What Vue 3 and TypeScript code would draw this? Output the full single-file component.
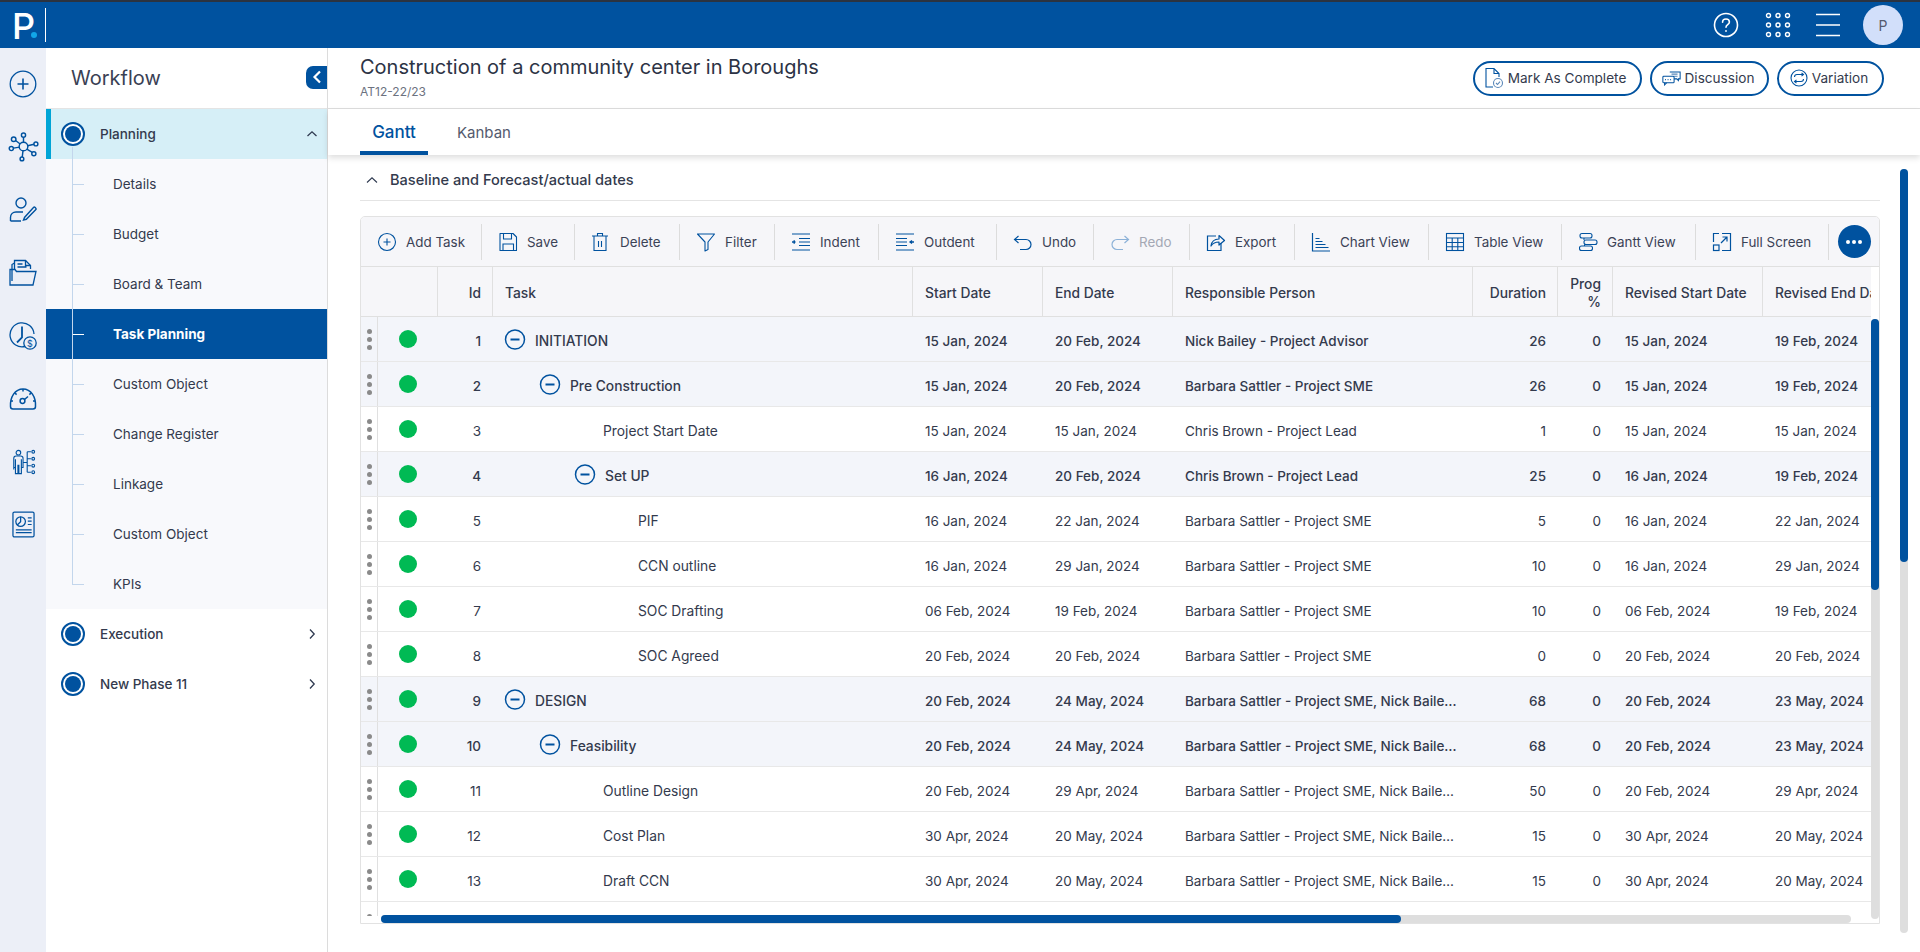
<script setup lang="ts">
interface Row {
  id: number; task: string; level: number; group: boolean; start: string; end: string;
  person: string; dur: number; rs: string; re: string;
}
const B = 'Barbara Sattler - Project SME';
const BN = 'Barbara Sattler - Project SME, Nick Bailey - Project Advisor';
const rows: Row[] = [
  { id: 1, task: 'INITIATION', level: 0, group: true, start: '15 Jan, 2024', end: '20 Feb, 2024', person: 'Nick Bailey - Project Advisor', dur: 26, rs: '15 Jan, 2024', re: '19 Feb, 2024' },
  { id: 2, task: 'Pre Construction', level: 1, group: true, start: '15 Jan, 2024', end: '20 Feb, 2024', person: B, dur: 26, rs: '15 Jan, 2024', re: '19 Feb, 2024' },
  { id: 3, task: 'Project Start Date', level: 2, group: false, start: '15 Jan, 2024', end: '15 Jan, 2024', person: 'Chris Brown - Project Lead', dur: 1, rs: '15 Jan, 2024', re: '15 Jan, 2024' },
  { id: 4, task: 'Set UP', level: 2, group: true, start: '16 Jan, 2024', end: '20 Feb, 2024', person: 'Chris Brown - Project Lead', dur: 25, rs: '16 Jan, 2024', re: '19 Feb, 2024' },
  { id: 5, task: 'PIF', level: 3, group: false, start: '16 Jan, 2024', end: '22 Jan, 2024', person: B, dur: 5, rs: '16 Jan, 2024', re: '22 Jan, 2024' },
  { id: 6, task: 'CCN outline', level: 3, group: false, start: '16 Jan, 2024', end: '29 Jan, 2024', person: B, dur: 10, rs: '16 Jan, 2024', re: '29 Jan, 2024' },
  { id: 7, task: 'SOC Drafting', level: 3, group: false, start: '06 Feb, 2024', end: '19 Feb, 2024', person: B, dur: 10, rs: '06 Feb, 2024', re: '19 Feb, 2024' },
  { id: 8, task: 'SOC Agreed', level: 3, group: false, start: '20 Feb, 2024', end: '20 Feb, 2024', person: B, dur: 0, rs: '20 Feb, 2024', re: '20 Feb, 2024' },
  { id: 9, task: 'DESIGN', level: 0, group: true, start: '20 Feb, 2024', end: '24 May, 2024', person: BN, dur: 68, rs: '20 Feb, 2024', re: '23 May, 2024' },
  { id: 10, task: 'Feasibility', level: 1, group: true, start: '20 Feb, 2024', end: '24 May, 2024', person: BN, dur: 68, rs: '20 Feb, 2024', re: '23 May, 2024' },
  { id: 11, task: 'Outline Design', level: 2, group: false, start: '20 Feb, 2024', end: '29 Apr, 2024', person: BN, dur: 50, rs: '20 Feb, 2024', re: '29 Apr, 2024' },
  { id: 12, task: 'Cost Plan', level: 2, group: false, start: '30 Apr, 2024', end: '20 May, 2024', person: BN, dur: 15, rs: '30 Apr, 2024', re: '20 May, 2024' },
  { id: 13, task: 'Draft CCN', level: 2, group: false, start: '30 Apr, 2024', end: '20 May, 2024', person: BN, dur: 15, rs: '30 Apr, 2024', re: '20 May, 2024' }
];
const subs = ['Details', 'Budget', 'Board & Team', 'Task Planning', 'Custom Object', 'Change Register', 'Linkage', 'Custom Object', 'KPIs'];
</script>

<template>
  <div class="page">
    <header class="topbar">
      <div class="logo"><span class="logo-p">P</span><i class="logo-dot"></i><i class="logo-line"></i></div>
      <div class="top-actions">
        <svg class="t-help" width="26" height="26" viewBox="0 0 26 26" fill="none" stroke="#fff" stroke-width="1.6"><circle cx="13" cy="13" r="11.5"/><path d="M9.6 10.2c0-2 1.5-3.2 3.4-3.2s3.4 1.2 3.4 3c0 2.6-3.4 2.6-3.4 5.2" stroke-linecap="round"/><circle cx="13" cy="19" r=".9" fill="#fff" stroke="none"/></svg>
        <svg class="t-apps" width="26" height="26" viewBox="0 0 26 26" fill="none" stroke="#fff" stroke-width="1.4"><circle cx="3.5" cy="3.5" r="2"/><circle cx="13" cy="3.5" r="2"/><circle cx="22.5" cy="3.5" r="2"/><circle cx="3.5" cy="13" r="2"/><circle cx="13" cy="13" r="2"/><circle cx="22.5" cy="13" r="2"/><circle cx="3.5" cy="22.5" r="2"/><circle cx="13" cy="22.5" r="2"/><circle cx="22.5" cy="22.5" r="2"/></svg>
        <svg class="t-menu" width="26" height="24" viewBox="0 0 26 24" fill="none" stroke="#fff" stroke-width="1.6"><path d="M1 1.5h24M1 12h24M1 22.5h24"/></svg>
        <div class="avatar">P</div>
      </div>
    </header>

    <div class="shell">
      <nav class="rail">
        <svg viewBox="0 0 28 28" class="r-icon" fill="none" stroke="#00529f" stroke-width="1.3"><circle cx="14" cy="14" r="12.8"/><path d="M14 8.5v11M8.5 14h11" stroke-width="1.6"/></svg>
        <svg viewBox="0 0 30 30" class="r-icon r-net" fill="none" stroke="#00529f" stroke-width="1.4"><circle cx="15" cy="15" r="4.2"/><circle cx="15" cy="4" r="2"/><circle cx="5.5" cy="8" r="2.2"/><circle cx="3.2" cy="17" r="2"/><circle cx="13.5" cy="27" r="1.8"/><circle cx="25" cy="22" r="2"/><circle cx="27" cy="12.5" r="1.9"/><path d="M15 6v5M7.3 9.2l4.5 3.4M5.2 16.6l6-1M14.5 19.2l-.7 6M18.2 17.6l5.3 3M19 14.2l6.2-1.4"/></svg>
        <svg viewBox="0 0 28 28" class="r-icon" fill="none" stroke="#00529f" stroke-width="1.4"><circle cx="12" cy="7" r="5"/><path d="M1.5 25v-3.5c0-3.5 2.5-5.5 5.500-5.500h7M1.500 25H12"/><path d="M15.500 24.500l-1 2.500 2.800-.7 9.600-9.800c.8-.8-1.300-3-2.200-2.200z" transform="translate(0 -3)"/></svg>
        <svg viewBox="0 0 28 28" class="r-icon" fill="none" stroke="#00529f" stroke-width="1.3"><path d="M3 22V5.500l2.500-1.500"/><path d="M5.500 10V1.500h11l5 5V10"/><path d="M16.500 1.500v5h5M8.500 5h5M8.500 8h9"/><path d="M1 10.500h5l1.500 2h19.500L24 26H1z"/></svg>
        <svg viewBox="0 0 28 28" class="r-icon" fill="none" stroke="#00529f" stroke-width="1.3"><path d="M16 24.500A12 12 0 1 1 25 12"/><path d="M13 4.500v11l-5 5" stroke-width="1.8"/><circle cx="21" cy="21" r="6.200" fill="#eceff7"/><text x="21" y="24.500" font-size="9" font-family="Inter, sans-serif" fill="#00529f" stroke="none" text-anchor="middle">$</text></svg>
        <svg viewBox="0 0 28 24" class="r-icon" fill="none" stroke="#00529f" stroke-width="1.5"><path d="M4 22a2.500 2.500 0 0 1-2.500-2.500C1 10 6 2 14 2s13 8 12.500 17.500A2.500 2.500 0 0 1 24 22z"/><circle cx="13.500" cy="14" r="2.400"/><path d="M15.500 12.500l3.500-3M14 2v2.500M6 6l1.600 1.600M22 6l-1.600 1.600M2 14h2M24 14h2"/></svg>
        <svg viewBox="0 0 27 28" class="r-person" fill="none" stroke="#00529f" stroke-width="1.2"><circle cx="8" cy="4" r="2.500"/><path d="M3 22V10c0-2 1-2.500 2.500-2.500h5C12 7.500 13 8 13 10v10h-1.800V11M3 20h1.800v-9M4.800 20v6.500h2.700V17M8.500 17v9.500h2.700V20"/><path d="M13 14.500h4M17.500 3v22M17.500 3h4M17.500 10.500h4M17.500 18h4M17.500 25h4"/><circle cx="24" cy="3" r="1.500"/><circle cx="24" cy="10.500" r="1.500"/><circle cx="24" cy="18" r="1.500"/><circle cx="24" cy="25" r="1.500"/></svg>
        <svg viewBox="0 0 24 28" class="r-small" fill="none" stroke="#00529f" stroke-width="1.300"><rect x="1" y="1" width="22" height="26" rx="1.500"/><circle cx="9" cy="11" r="5"/><path d="M9 6v5l-3.500 3.500M16.500 7h4M16.500 10.500h4M16.500 14h4M4 19.500h16.500M4 22.500h16.500"/></svg>
      </nav>

      <aside class="side">
        <div class="side-head">
          <span class="side-title">Workflow</span>
          <button class="collapse"><svg width="10" height="14" viewBox="0 0 10 14" fill="none" stroke="#fff" stroke-width="2.200"><path d="M8 1.500L2.500 7 8 12.500"/></svg></button>
        </div>
        <div class="phase phase-open">
          <span class="node"></span><span class="phase-name">Planning</span>
          <svg class="chev" width="12" height="8" viewBox="0 0 12 8" fill="none" stroke="#2f3a50" stroke-width="1.300"><path d="M1.500 6L6 1.800 10.500 6"/></svg>
        </div>
        <ul class="subs">
          <i class="tree"></i>
          <li v-for="(s, i) in subs" :key="i" class="sub" :class="{ on: s === 'Task Planning' }"><i class="tick"></i>{{ s }}</li>
        </ul>
        <div class="phase">
          <span class="node"></span><span class="phase-name">Execution</span>
          <svg class="chev" width="8" height="12" viewBox="0 0 8 12" fill="none" stroke="#2f3a50" stroke-width="1.300"><path d="M2 1.500L6.200 6 2 10.500"/></svg>
        </div>
        <div class="phase">
          <span class="node"></span><span class="phase-name">New Phase 11</span>
          <svg class="chev" width="8" height="12" viewBox="0 0 8 12" fill="none" stroke="#2f3a50" stroke-width="1.300"><path d="M2 1.500L6.200 6 2 10.500"/></svg>
        </div>
      </aside>

      <main class="main">
        <div class="title-row">
          <div>
            <h1 class="title">Construction of a community center in Boroughs</h1>
            <div class="code">AT12-22/23</div>
          </div>
          <div class="btns">
            <button class="pill p1">
              <svg width="20" height="22" viewBox="0 0 20 22" fill="none" stroke="#00529f" stroke-width="1.100"><path d="M9 20H2V1.500h8l5 5V10M10 1.500v5h5"/><circle cx="14" cy="16" r="4.500" stroke="#5b88b8"/><path d="M12 16l1.500 1.500 2.500-2.800" stroke="#5b88b8"/></svg>
              Mark As Complete
            </button>
            <button class="pill p2">
              <svg width="19" height="16" viewBox="0 0 22 18" fill="none" stroke="#00529f" stroke-width="1.200"><path d="M9 2h12v8h-2v2l-2-2h-3"/><path d="M11 4.500h7M14 7h4" stroke="#5b88b8"/><rect x="1" y="7" width="13" height="7.500" rx="1"/><path d="M3 14.500V17l2.500-2.500" /><path d="M3.500 10.800h1M6.500 10.800h1M9.500 10.800h1" stroke-width="1.400"/></svg>
              Discussion
            </button>
            <button class="pill p3">
              <svg width="18" height="18" viewBox="0 0 18 18" fill="none" stroke="#00529f" stroke-width="1.100"><circle cx="9" cy="9" r="8"/><path d="M4.500 8c0-1.500 1-2.500 2.500-2.500h6.500M11.500 3.800l2 1.700-2 1.700M13.500 10c0 1.500-1 2.500-2.500 2.500H4.500M6.500 10.800l-2 1.700 2 1.700"/></svg>
              Variation
            </button>
          </div>
        </div>

        <div class="tabs">
          <span class="tab on">Gantt</span>
          <span class="tab">Kanban</span>
        </div>

        <div class="section">
          <svg width="12" height="8" viewBox="0 0 12 8" fill="none" stroke="#2f3a50" stroke-width="1.100"><path d="M1 6.500L6 1.800l5 4.700"/></svg>
          <span>Baseline and Forecast/actual dates</span>
        </div>

        <div class="box">
          <div class="toolbar">
            <div class="tool">
              <svg width="20" height="20" viewBox="0 0 20 20" fill="none" stroke="#00529f" stroke-width="1.100"><circle cx="10" cy="10" r="8.500"/><path d="M10 6.500v7M6.500 10h7"/></svg><span>Add Task</span>
            </div>
            <div class="tool">
              <svg width="20" height="20" viewBox="0 0 20 20" fill="none" stroke="#00529f" stroke-width="1.100"><path d="M2 1.500h13l3.500 3.500v13.500H2z" stroke-linejoin="round"/><path d="M5.500 1.500V7h8V1.500M5 18.500V12h10.500v6.500"/></svg><span>Save</span>
            </div>
            <div class="tool t-del">
              <svg width="18" height="20" viewBox="0 0 18 20" fill="none" stroke="#00529f" stroke-width="1.100"><path d="M1 4h16M6.500 4V1.500h5V4M3 4v14.500h12V4"/><path d="M7.500 9v6M10.500 9v6"/></svg><span>Delete</span>
            </div>
            <div class="tool">
              <svg width="20" height="20" viewBox="0 0 20 20" fill="none" stroke="#00529f" stroke-width="1.100"><path d="M1.500 2h17l-6.500 8v7.500l-3 1.500v-9z" stroke-linejoin="round"/></svg><span>Filter</span>
            </div>
            <div class="tool">
              <svg width="20" height="20" viewBox="0 0 20 20" fill="none" stroke="#00529f" stroke-width="1.200"><path d="M1 2h18M8 6.500h11M8 10h11M8 13.500h11M1 18h18"/><path d="M1 10h3.500M3.200 8.200v3.600" stroke-width="1.400"/></svg><span>Indent</span>
            </div>
            <div class="tool">
              <svg width="20" height="20" viewBox="0 0 20 20" fill="none" stroke="#00529f" stroke-width="1.200"><path d="M1 2h18M1 6.500h11M1 10h11M1 13.500h11M1 18h18"/><path d="M15 10h4M17 8.500L15 10l2 1.500" stroke-width="1.300"/></svg><span>Outdent</span>
            </div>
            <div class="tool">
              <svg width="20" height="18" viewBox="0 0 20 18" fill="none" stroke="#00529f" stroke-width="1.200"><path d="M5.500 3L1.500 6.500l4 3.500M1.500 6.500H13a5 5 0 0 1 0 10H7"/></svg><span>Undo</span>
            </div>
            <div class="tool off">
              <svg width="20" height="18" viewBox="0 0 20 18" fill="none" stroke="#8db2d8" stroke-width="1.200"><path d="M14.500 3l4 3.500-4 3.500M18.500 6.500H7a5 5 0 0 0 0 10h6"/></svg><span>Redo</span>
            </div>
            <div class="tool">
              <svg width="20" height="20" viewBox="0 0 20 20" fill="none" stroke="#00529f" stroke-width="1.200"><path d="M10 4H1.500v14.500H15V11"/><path d="M5 14c.5-4 3-7 8-7V3.500l5.500 5-5.500 4.500V10c-3.500 0-6 1-8 4z" stroke-linejoin="round"/></svg><span>Export</span>
            </div>
            <div class="tool">
              <svg width="20" height="20" viewBox="0 0 20 20" fill="none" stroke="#00529f" stroke-width="1.200"><path d="M1.500 1v18h17.500"/><path d="M4.500 6.500h4M4.500 9.500h7M4.500 12.500h10M4.500 15.500h13"/></svg><span>Chart View</span>
            </div>
            <div class="tool">
              <svg width="20" height="20" viewBox="0 0 20 20" fill="none" stroke="#00529f" stroke-width="1.100"><rect x="1.500" y="1.500" width="17" height="17"/><path d="M1.500 6h17M1.500 10.500h17M1.500 14.800h17M7.200 6v12.500M12.800 6v12.500"/></svg><span>Table View</span>
            </div>
            <div class="tool">
              <svg width="20" height="20" viewBox="0 0 20 20" fill="none" stroke="#00529f" stroke-width="1.100"><rect x="2" y="1.500" width="12" height="4.500" rx="2"/><rect x="6" y="8" width="13" height="4.500" rx="2"/><rect x="1.500" y="14" width="13" height="4.500" rx="2"/><path d="M6 6v2M6.500 12.500V14"/></svg><span>Gantt View</span>
            </div>
            <div class="tool">
              <svg width="20" height="20" viewBox="0 0 20 20" fill="none" stroke="#00529f" stroke-width="1.200"><path d="M10 1.500h8.500V18.500H10M1.500 10V1.500H7"/><rect x="1.500" y="13" width="5.500" height="5.500"/><path d="M9 11l6-6M10.500 5H15v4.500"/></svg><span>Full Screen</span>
            </div>
            <div class="more-cell"><button class="more"><i></i><i></i><i></i></button></div>
          </div>

          <div class="view">
            <div class="head">
              <div class="hc c-lead"></div>
              <div class="hc c-id num">Id</div>
              <div class="hc c-task">Task</div>
              <div class="hc c-date">Start Date</div>
              <div class="hc c-date">End Date</div>
              <div class="hc c-person">Responsible Person</div>
              <div class="hc c-dur num">Duration</div>
              <div class="hc c-prog num">Prog<br>%</div>
              <div class="hc c-rev">Revised Start Date</div>
              <div class="hc c-rev">Revised End Date</div>
            </div>
            <div class="body">
              <div v-for="r in rows" :key="r.id" class="row" :class="{ group: r.group }">
                <div class="c-drag"><i></i><i></i><i></i></div>
                <div class="c-status"><i></i></div>
                <div class="bc c-id num">{{ r.id }}</div>
                <div class="bc c-task" :class="'lv' + r.level">
                  <svg v-if="r.group" class="minus" width="22" height="22" viewBox="0 0 22 22" fill="none" stroke="#00529f"><circle cx="11" cy="11" r="9.500" stroke-width="1.500"/><path d="M6.500 11h9" stroke-width="2"/></svg>
                  <span>{{ r.task }}</span>
                </div>
                <div class="bc c-date">{{ r.start }}</div>
                <div class="bc c-date">{{ r.end }}</div>
                <div class="bc c-person"><span>{{ r.person }}</span></div>
                <div class="bc c-dur num">{{ r.dur }}</div>
                <div class="bc c-prog num">0</div>
                <div class="bc c-rev">{{ r.rs }}</div>
                <div class="bc c-rev">{{ r.re }}</div>
              </div>
              <div class="row">
                <div class="c-drag"><i></i><i></i><i></i></div>
              </div>
            </div>
          </div>

          <div class="hbar"><i></i></div>
          <div class="vbar"><i></i></div>
        </div>
        <div class="outer-bar"><i></i></div>
      </main>
    </div>
  </div>
</template>

<style>
html, body { margin: 0; background: #fff; overflow: hidden; }
</style>

<style scoped>
* { box-sizing: border-box; }
.page { width: 1920px; height: 952px; display: flex; flex-direction: column; font-family: Inter, "Liberation Sans", sans-serif; font-size: 13.5px; color: #333a4d; overflow: hidden; }
button { font: inherit; color: inherit; background: none; border: 0; padding: 0; cursor: pointer; }

.topbar { height: 48px; flex: none; background: #00529f; border-top: 2px solid #2b3340; display: flex; justify-content: space-between; }
.logo { position: relative; width: 46px; }
.logo-p { position: absolute; left: 12px; top: 4px; font-size: 36px; line-height: 40px; font-weight: 500; color: #fff; }
.logo-dot { position: absolute; left: 31px; top: 30px; width: 6px; height: 6px; border-radius: 50%; background: #11a6e8; }
.logo-line { position: absolute; left: 45px; top: 6px; width: 1px; height: 34px; background: #fff; }
.top-actions { display: flex; align-items: center; padding-right: 17px; }
.t-help { margin-right: 26px; }
.t-apps { margin-right: 24px; }
.t-menu { margin-right: 22px; }
.avatar { width: 40px; height: 40px; border-radius: 50%; background: #d2dffa; color: #555b6e; font-size: 14px; display: flex; align-items: center; justify-content: center; }

.shell { flex: 1; display: flex; min-height: 0; }
.rail { width: 46px; flex: none; background: #eceff7; display: grid; grid-auto-rows: 63px; justify-items: center; padding-top: 4px; align-items: center; align-content: start; }
.r-icon { width: 28px; height: 28px; }
.r-net { width: 31px; height: 31px; }
.r-person { width: 25px; height: 26px; }
.r-small { width: 23px; height: 27px; }

.side { width: 282px; flex: none; border-right: 1px solid #dcdcdc; background: #fff; }
.side-head { height: 61px; display: flex; align-items: center; justify-content: space-between; padding-left: 25px; border-bottom: 1px solid #e4e4e4; }
.side-title { font-size: 20px; color: #3a4154; }
.collapse { width: 21px; height: 23px; background: #00529f; border-radius: 7px 0 0 7px; display: flex; align-items: center; justify-content: center; margin-bottom: 2px; }
.phase { position: relative; height: 50px; display: flex; align-items: center; padding-left: 15px; }
.phase-open { background: #d6eff7; border-left: 5px solid #00a4d6; padding-left: 10px; }
.node { width: 24px; height: 24px; border-radius: 50%; border: 2px solid #00529f; flex: none; position: relative; background: #fff; }
.node::after { content: ""; position: absolute; inset: 2px; border-radius: 50%; background: #00529f; }
.phase-name { margin-left: 15px; font-weight: 500; font-size: 13.5px; color: #333a4d; }
.chev { position: absolute; right: 11px; top: 50%; transform: translateY(-50%); }
.phase-open .chev { right: 9px; }
.subs { position: relative; margin: 0; padding: 0; list-style: none; background: #f8f9fc; }
.tree { position: absolute; left: 26px; top: -12px; height: 438px; width: 1px; background: #c3d6ec; z-index: 1; }
.sub { position: relative; height: 50px; padding-left: 67px; display: flex; align-items: center; }
.sub.on { background: #00529f; color: #fff; font-weight: 700; }
.tick { position: absolute; left: 26px; top: 25px; width: 12px; height: 1px; background: #c3d6ec; }
.sub.on .tick { background: #fff; }

.main { position: relative; flex: 1; min-width: 0; padding: 0 40px 0 32px; }
.title-row { height: 61px; margin: 0 -40px 0 -32px; padding: 0 36px 2px 32px; display: flex; justify-content: space-between; align-items: center; border-bottom: 1px solid #dedede; }
.title { margin: 0; font-size: 20px; line-height: 26px; font-weight: 400; color: #2c3345; }
.code { margin-top: 4px; font-size: 12px; line-height: 16px; color: #6c7280; }
.btns { display: flex; gap: 8px; padding-top: 2px; }
.pill { height: 35px; border: 2px solid #00529f; border-radius: 18px; display: flex; align-items: center; justify-content: center; gap: 4px; background: #fff; font-size: 13.6px; padding-right: 3px; }
.p1 { width: 169px; padding-right: 5px; }
.p2 { width: 119px; }
.p3 { width: 107px; }

.tabs { height: 46px; margin: 0 -40px 0 -32px; padding-left: 32px; display: flex; box-shadow: 0 3px 6px rgba(0, 0, 0, .13); position: relative; }
.tab { padding: 0 29px 0 0; line-height: 48px; color: #555b6e; font-size: 15px; }
.tab.on { width: 68px; padding: 0; margin-right: 29px; text-align: center; font-size: 17px; font-weight: 500; color: #00529f; border-bottom: 4px solid #00529f; line-height: 46px; height: 46px; }

.section { height: 46px; display: flex; align-items: center; gap: 12px; border-bottom: 1px solid #e4e4e4; padding: 5px 0 0 6px; font-weight: 500; font-size: 14.6px; }

.box { position: relative; margin-top: 15px; height: 708px; border: 1px solid #e2e2e2; border-radius: 5px 5px 0 0; overflow: hidden; }
.toolbar { height: 50px; display: grid; grid-template-columns: 121px 93px 105px 95px 104px 118px 97px 96px 105px 134px 133px 134px 133px 1fr; background: #f6f6f9; border-bottom: 1px solid #e0e0e0; align-items: center; font-size: 13.4px; }
.tool { height: 36px; display: flex; align-items: center; gap: 9px; padding-left: 16px; border-right: 1px solid #dcdcdc; color: #3b4256; white-space: nowrap; }
.t-del { gap: 11px; }
.tool.off { color: #a4a8b4; }
.more-cell { display: flex; justify-content: center; }
.more { width: 33px; height: 33px; border-radius: 50%; background: #00529f; display: flex; align-items: center; justify-content: center; gap: 2px; }
.more i { width: 4px; height: 4px; border-radius: 50%; background: #fff; }

.view { width: 1510px; height: 649px; overflow: hidden; }
.head { display: flex; width: 1552px; height: 50px; background: #f6f6f9; border-bottom: 1px solid #e0e0e0; font-size: 13.8px; }
.hc { display: flex; align-items: center; padding: 3px 12px 0; border-right: 1px solid #e0e0e0; font-weight: 500; flex: none; line-height: 18px; }
.c-lead { width: 77px; }
.c-id { width: 55px; }
.c-task { width: 420px; }
.c-date { width: 130px; }
.c-person { width: 300px; }
.c-dur { width: 85px; }
.c-prog { width: 55px; }
.c-rev { width: 150px; }
.hc.num { justify-content: flex-end; text-align: right; padding-right: 11px; }
.row { display: flex; width: 1552px; height: 45px; border-bottom: 1px solid #e8e8e8; background: #fff; }
.row.group { background: #f3f5fa; font-weight: 500; }
.c-drag { width: 17px; flex: none; border-right: 1px solid #e0e0e0; display: flex; flex-direction: column; align-items: center; padding-top: 12px; gap: 3px; }
.c-drag i { width: 5px; height: 5px; border-radius: 50%; background: #8a8a8a; margin-left: 1px; flex: none; }
.c-status { width: 60px; flex: none; display: flex; align-items: center; padding-left: 21px; }
.c-status i { width: 18px; height: 18px; border-radius: 50%; background: #00ba54; }
.bc { flex: none; display: flex; align-items: center; padding: 3px 12px 0; white-space: nowrap; overflow: hidden; }
.bc.num { justify-content: flex-end; }
.bc.c-person span { overflow: hidden; text-overflow: ellipsis; }
.bc.c-task { padding-left: 11px; font-size: 13.8px; overflow: visible; }
.minus { flex: none; margin-right: 9px; transform: translateY(-1.5px); }
.bc.c-task.lv1 { padding-left: 46px; }
.bc.c-task.lv2 { padding-left: 110px; }
.bc.c-task.lv2 .minus { margin-left: -29px; }
.bc.c-task.lv3 { padding-left: 145px; }

.hbar { position: absolute; left: 20px; right: 28px; bottom: 0; height: 8px; border-radius: 4px; background: #dedede; }
.hbar i { display: block; width: 1020px; height: 8px; border-radius: 4px; background: #00529f; }
.vbar { position: absolute; right: 0; top: 102px; height: 600px; width: 8px; border-radius: 4px; background: #dedede; }
.vbar i { display: block; height: 271px; border-radius: 4px; background: #00529f; }
.outer-bar { position: absolute; left: 1572px; top: 121px; width: 8px; height: 764px; border-radius: 4px; background: #dedede; }
.outer-bar i { display: block; height: 393px; border-radius: 4px; background: #00529f; }
</style>
